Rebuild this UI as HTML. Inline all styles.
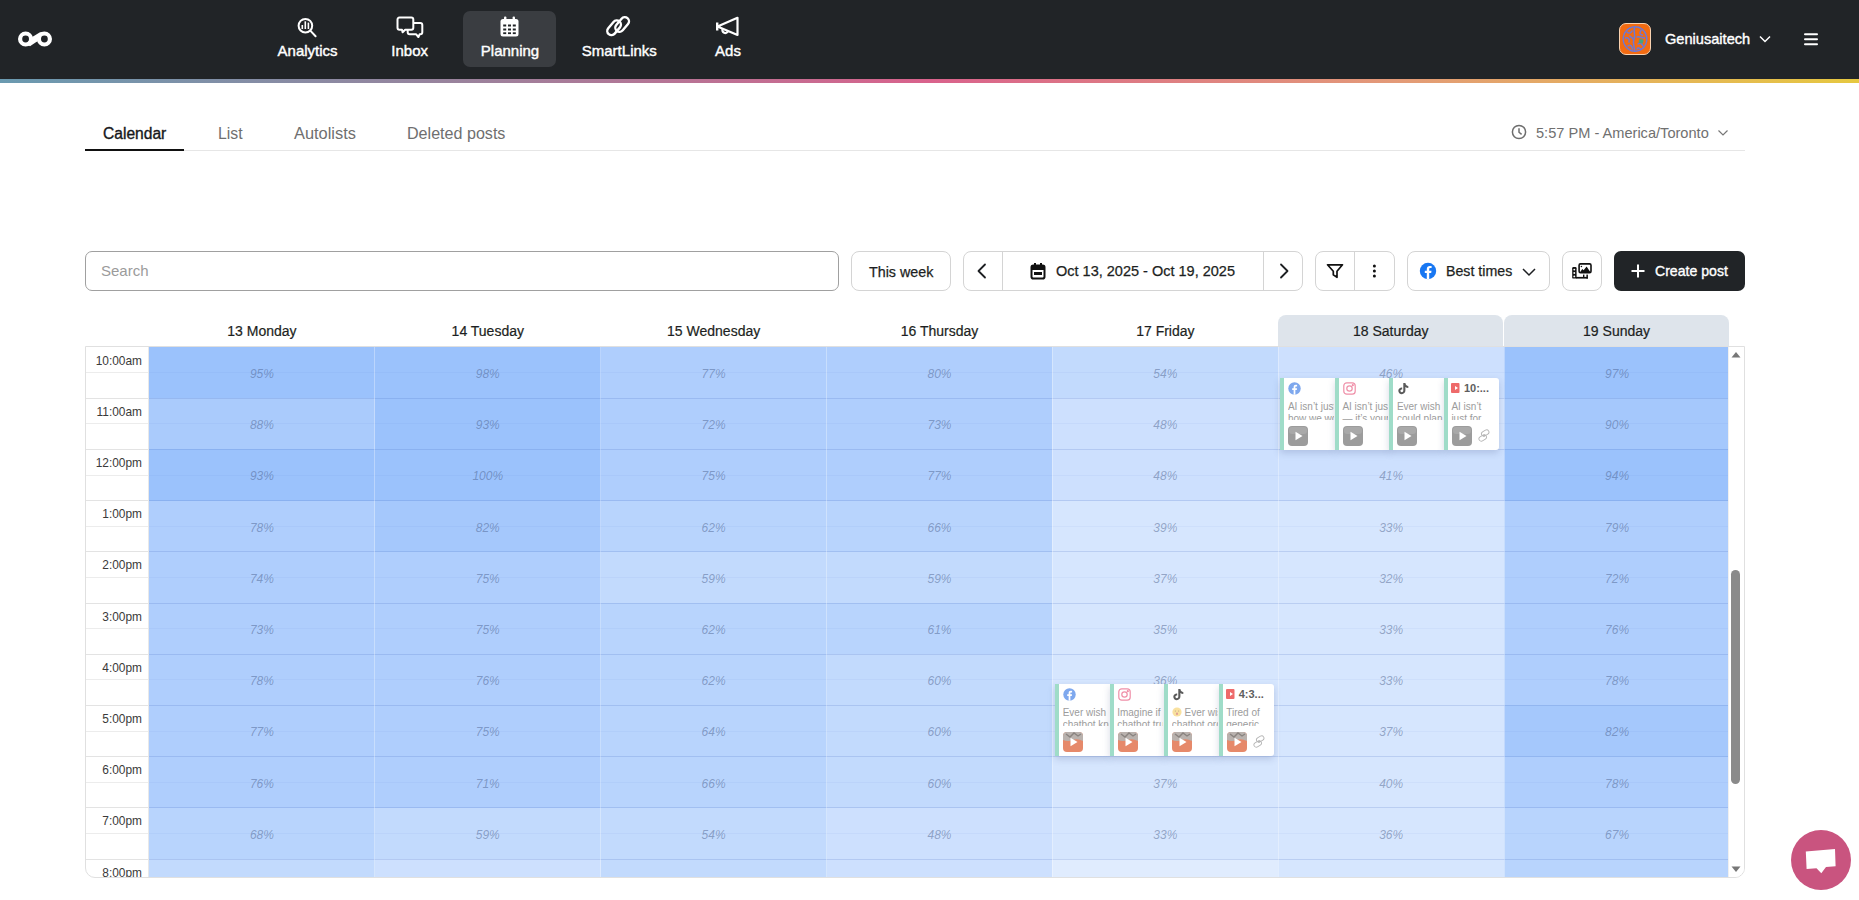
<!DOCTYPE html>
<html><head><meta charset="utf-8"><title>Planning</title>
<style>
*{box-sizing:border-box}
html,body{margin:0;padding:0}
body{width:1859px;height:900px;overflow:hidden;background:#fff;font-family:"Liberation Sans",sans-serif;position:relative;color:#1d1f22}
.abs{position:absolute}
#nav{position:absolute;left:0;top:0;width:1859px;height:79px;background:#212427}
#grad{position:absolute;left:0;top:79px;width:1859px;height:4px;background:linear-gradient(90deg,#6A9AB0 0%,#9A829C 25%,#D9628C 50%,#E39A78 75%,#E6C840 100%)}
.nl{position:absolute;top:43px;font-size:15px;-webkit-text-stroke:0.4px #fff;color:#fff;white-space:nowrap;line-height:16px}
.tab{position:absolute;top:124.5px;font-size:15px;color:#6f6f6f;white-space:nowrap;line-height:18px}
.btn{position:absolute;top:251px;height:40px;border:1px solid #d4d4d4;border-radius:8px;background:#fff}
.bt{position:absolute;font-size:14px;color:#1d1f22;white-space:nowrap;line-height:16px;-webkit-text-stroke:0.25px currentColor}
.dh{position:absolute;top:315px;height:32px;text-align:center;font-size:14px;line-height:32px;color:#1d1f22;-webkit-text-stroke:0.2px #1d1f22}
.tl{position:absolute;left:86px;width:56px;text-align:right;font-size:11.9px;color:#3a3a3a;line-height:13px}
.cell{position:absolute}
.pc{position:absolute;font-size:12px;font-style:italic;color:rgba(65,85,130,0.46);text-align:center;line-height:14px}
.card{position:absolute;background:#fff;border-left:4px solid #9fdcc8;overflow:hidden}
</style></head><body>

<div id="nav"></div><div id="grad"></div>
<svg class="abs" style="left:14px;top:28px" width="44" height="22" viewBox="0 0 44 22">
<circle cx="11.6" cy="11" r="5.5" fill="none" stroke="#fff" stroke-width="4.2"/>
<circle cx="30.4" cy="11" r="5.5" fill="none" stroke="#fff" stroke-width="4.2"/>
<polygon points="12,16 19,8.5 26,4.2 30,4.2 23,13.5 16,18.2" fill="#fff"/>
</svg>
<div class="abs" style="left:463px;top:11px;width:93px;height:56px;border-radius:7px;background:#3a3d41"></div>
<svg class="abs" style="left:296px;top:16px" width="24" height="24" viewBox="0 0 24 24" fill="none" stroke="#fff" stroke-width="2">
<circle cx="9.4" cy="9.7" r="6.8"/><line x1="14.3" y1="14.6" x2="19.6" y2="20.2" stroke-linecap="round"/>
<line x1="6.3" y1="9" x2="6.3" y2="13" stroke-width="1.6"/><line x1="9.3" y1="5.3" x2="9.3" y2="13" stroke-width="1.6"/><line x1="12.4" y1="6.6" x2="12.4" y2="13" stroke-width="1.6"/>
</svg>
<svg class="abs" style="left:395.6px;top:15.8px" width="28" height="24" viewBox="0 0 28 24" fill="none" stroke="#fff" stroke-width="2" stroke-linejoin="round">
<path d="M3.5 1.6 H15.3 Q17.3 1.6 17.3 3.6 V11.7 Q17.3 13.7 15.3 13.7 H9.2 L6.6 16.3 L6 13.7 H3.5 Q1.5 13.7 1.5 11.7 V3.6 Q1.5 1.6 3.5 1.6 Z"/>
<path d="M17.3 7.1 H24.3 Q26.3 7.1 26.3 9.1 V16.3 Q26.3 18.3 24.3 18.3 H23.6 L22.4 21 L20.2 18.3 H13.7 Q11.7 18.3 11.7 16.3 V13.7"/>
</svg>
<svg class="abs" style="left:499px;top:15px" width="21" height="23" viewBox="0 0 21 23">
<rect x="1.5" y="4" width="18" height="17.5" rx="2.5" fill="#fff"/>
<rect x="5" y="1.5" width="2.4" height="5" rx="1" fill="#fff"/><rect x="13.6" y="1.5" width="2.4" height="5" rx="1" fill="#fff"/>
<g fill="#212427"><rect x="4.2" y="9.5" width="3" height="2"/><rect x="9" y="9.5" width="3" height="2"/><rect x="13.8" y="9.5" width="3" height="2"/>
<rect x="4.2" y="13.5" width="3" height="2"/><rect x="9" y="13.5" width="3" height="2"/><rect x="13.8" y="13.5" width="3" height="2"/>
<rect x="4.2" y="17.3" width="3" height="1.8"/><rect x="9" y="17.3" width="3" height="1.8"/><rect x="13.8" y="17.3" width="3" height="1.8"/></g>
</svg>
<svg class="abs" style="left:604px;top:15px" width="28" height="23" viewBox="0 0 28 23" fill="none" stroke="#fff" stroke-width="2.4">
<rect x="1.8" y="8.6" width="16.6" height="8.4" rx="4.2" transform="rotate(-50 10.1 12.8)"/>
<rect x="9.85" y="5.3" width="16.6" height="8.4" rx="4.2" transform="rotate(-50 18.15 9.5)"/>
</svg>
<svg class="abs" style="left:713px;top:15px" width="28" height="24" viewBox="0 0 28 24" fill="none" stroke="#fff" stroke-width="2.2" stroke-linejoin="round">
<path d="M4.2 7.5 V15.5" stroke-width="2.4"/><path d="M4.5 11.5 L24.5 2.8 V20 Z"/><path d="M9.6 14 A2.8 2.8 0 0 0 15 16.2"/>
</svg>
<div class="nl" style="left:247.60000000000002px;width:120px;text-align:center">Analytics</div>
<div class="nl" style="left:349.7px;width:120px;text-align:center">Inbox</div>
<div class="nl" style="left:450px;width:120px;text-align:center">Planning</div>
<div class="nl" style="left:559.3px;width:120px;text-align:center">SmartLinks</div>
<div class="nl" style="left:668px;width:120px;text-align:center">Ads</div>
<div class="abs" style="left:1619px;top:23px;width:32px;height:32px;border-radius:7px;background:#f26b12;border:1px solid #f9d2b0"></div>
<svg class="abs" style="left:1621px;top:25px" width="28" height="28" viewBox="0 0 28 28" fill="none" stroke="#6b78d8" stroke-width="1.5" stroke-linecap="round">
<ellipse cx="14" cy="14" rx="11.8" ry="12.2" stroke-dasharray="3 1.2"/>
<path d="M13.5 2.5 C12 7 15 10 13 14 C11 18 14 22 13.5 26"/>
<path d="M6 7 C8 9 10 8 11 6"/><path d="M4.5 13 C7 12 9 14 8 17"/><path d="M7 21 C9 19 11 21 11.5 24"/>
<path d="M9 11 C10 13 12 12 12.5 15"/><path d="M20 5.5 C18 8 19 10 21.5 10"/><path d="M16 12 C18 11 20 13 23.5 13"/>
<path d="M17 19 C19 17 21 19 22 21"/><path d="M16 24 C17 22 19 23 20 24.5"/>
<path d="M19 14.5 L22 15 L21.5 18 L18.5 17.5 Z" fill="#3fa487" stroke="#3fa487" stroke-width="1"/>
</svg>
<div class="abs" style="left:1665px;top:31px;font-size:14.6px;-webkit-text-stroke:0.4px #fff;color:#fff;line-height:17px;white-space:nowrap">Geniusaitech</div>
<svg class="abs" style="left:1758px;top:34px" width="14" height="10" viewBox="0 0 14 10" fill="none" stroke="#fff" stroke-width="1.5"><path d="M2 2.5 L7 7.5 L12 2.5"/></svg>
<svg class="abs" style="left:1803px;top:32px" width="16" height="15" viewBox="0 0 16 15" fill="#fff"><rect x="1" y="1.3" width="14" height="2" rx="1"/><rect x="1" y="6.3" width="14" height="2" rx="1"/><rect x="1" y="11.3" width="14" height="2" rx="1"/></svg>
<div class="tab" style="left:103px;color:#16181b;-webkit-text-stroke:0.35px #16181b;font-size:15.6px">Calendar</div>
<div class="tab" style="left:218px;font-size:15.8px">List</div>
<div class="tab" style="left:294px;top:123.6px;font-size:16.4px">Autolists</div>
<div class="tab" style="left:407px;top:123.6px;font-size:16.1px">Deleted posts</div>
<div class="abs" style="left:184px;top:150px;width:1561px;height:1px;background:#e6e6e6"></div>
<div class="abs" style="left:85px;top:149px;width:99px;height:2px;background:#111"></div>
<svg class="abs" style="left:1511px;top:124px" width="16" height="16" viewBox="0 0 16 16" fill="none" stroke="#6d6d6d" stroke-width="1.5"><circle cx="8" cy="8" r="6.6"/><path d="M8 4.2 V8.2 L10.6 10.4"/></svg>
<div class="abs" style="left:1536px;top:125px;font-size:14.6px;color:#707070;line-height:17px;white-space:nowrap">5:57 PM - America/Toronto</div>
<svg class="abs" style="left:1717px;top:128px" width="12" height="9" viewBox="0 0 12 9" fill="none" stroke="#777" stroke-width="1.2"><path d="M1.5 2.5 L6 7 L10.5 2.5"/></svg>
<div class="btn" style="left:85px;width:754px;border-color:#a0a0a0;border-radius:7px"></div>
<div class="bt" style="left:101px;top:262px;font-size:15px;color:#9b9b9b;line-height:18px;-webkit-text-stroke:0">Search</div>
<div class="btn" style="left:851px;width:100px"></div>
<div class="bt" style="left:869px;top:264px;font-size:14.3px;line-height:17px">This week</div>
<div class="btn" style="left:963px;width:340px"></div>
<div class="abs" style="left:1002px;top:252px;width:1px;height:38px;background:#d4d4d4"></div>
<div class="abs" style="left:1263px;top:252px;width:1px;height:38px;background:#d4d4d4"></div>
<svg class="abs" style="left:975px;top:263px" width="14" height="16" viewBox="0 0 14 16" fill="none" stroke="#1d1f22" stroke-width="1.8" stroke-linecap="round" stroke-linejoin="round"><path d="M10 1.5 L3.5 8 L10 14.5"/></svg>
<svg class="abs" style="left:1277px;top:263px" width="14" height="16" viewBox="0 0 14 16" fill="none" stroke="#1d1f22" stroke-width="1.8" stroke-linecap="round" stroke-linejoin="round"><path d="M4 1.5 L10.5 8 L4 14.5"/></svg>
<svg class="abs" style="left:1030px;top:262px" width="16" height="18" viewBox="0 0 16 18"><rect x="1.5" y="3.5" width="13" height="13" rx="1.8" fill="none" stroke="#111" stroke-width="2"/><rect x="4" y="1" width="2" height="4" fill="#111"/><rect x="10" y="1" width="2" height="4" fill="#111"/><rect x="1.5" y="3.5" width="13" height="4.5" fill="#111"/><rect x="4" y="10" width="8" height="3" fill="#111"/></svg>
<div class="bt" style="left:1056px;top:263px;font-size:14.5px;line-height:17px">Oct 13, 2025 - Oct 19, 2025</div>
<div class="btn" style="left:1315px;width:80px"></div>
<div class="abs" style="left:1354px;top:252px;width:1px;height:38px;background:#d4d4d4"></div>
<svg class="abs" style="left:1326px;top:263px" width="18" height="16" viewBox="0 0 18 16" fill="none" stroke="#111" stroke-width="1.7" stroke-linejoin="round"><path d="M1.5 1.8 H16.5 L11 8.2 V14.3 L7.3 11.8 V8.2 Z"/></svg>
<svg class="abs" style="left:1371px;top:263px" width="7" height="16" viewBox="0 0 7 16" fill="#111"><circle cx="3.4" cy="3" r="1.5"/><circle cx="3.4" cy="8" r="1.5"/><circle cx="3.4" cy="13" r="1.5"/></svg>
<div class="btn" style="left:1407px;width:143px"></div>
<svg class="abs" style="left:1419px;top:262px" width="18" height="18" viewBox="0 0 18 18"><circle cx="9" cy="9" r="8.2" fill="#1877f2"/><path d="M10.2 17.2 V11 H12.2 L12.5 8.7 H10.2 V7.3 C10.2 6.6 10.5 6.1 11.4 6.1 H12.6 V4.1 C12.2 4 11.5 3.9 10.8 3.9 C9 3.9 7.8 5 7.8 7 V8.7 H5.8 V11 H7.8 V17.2 Z" fill="#fff"/></svg>
<div class="bt" style="left:1446px;top:263px;font-size:14.2px;line-height:17px">Best times</div>
<svg class="abs" style="left:1521px;top:266px" width="16" height="12" viewBox="0 0 16 12" fill="none" stroke="#1d1f22" stroke-width="1.5"><path d="M2 3 L8 9 L14 3"/></svg>
<div class="btn" style="left:1562px;width:40px"></div>
<svg class="abs" style="left:1571px;top:262px" width="22" height="18" viewBox="0 0 22 18"><rect x="8.1" y="1.9" width="11.9" height="8.8" rx="1.4" fill="none" stroke="#111" stroke-width="1.6"/><path d="M8.8 10.6 L11.3 7 L12.6 8.2 L15.6 4.6 L19.6 10.6 Z" fill="#111"/><circle cx="10.4" cy="4.5" r="0.8" fill="#111"/><rect x="1.2" y="5" width="4.4" height="11.6" rx="1.2" fill="#111"/><g fill="#fff"><circle cx="3.3" cy="7.6" r="0.95"/><circle cx="3.3" cy="11" r="0.95"/><circle cx="3.3" cy="14.4" r="0.95"/></g><rect x="5" y="14.9" width="11.8" height="1.7" fill="#111"/><rect x="15.4" y="12.6" width="1.5" height="4" fill="#111"/><rect x="12" y="12.6" width="1.4" height="2.6" fill="#111"/></svg>
<div class="abs" style="left:1614px;top:251px;width:131px;height:40px;border-radius:7px;background:#212427"></div>
<svg class="abs" style="left:1630px;top:263px" width="16" height="16" viewBox="0 0 16 16" stroke="#fff" stroke-width="2"><path d="M8 1.5 V14.5 M1.5 8 H14.5"/></svg>
<div class="abs" style="left:1655px;top:263px;font-size:14.1px;-webkit-text-stroke:0.35px #fff;color:#fff;line-height:17px;white-space:nowrap">Create post</div>
<div class="dh" style="left:149.00px;width:225.86px;">13 Monday</div>
<div class="dh" style="left:374.86px;width:225.86px;">14 Tuesday</div>
<div class="dh" style="left:600.71px;width:225.86px;">15 Wednesday</div>
<div class="dh" style="left:826.57px;width:225.86px;">16 Thursday</div>
<div class="dh" style="left:1052.43px;width:225.86px;">17 Friday</div>
<div class="dh" style="left:1278.29px;width:224.86px;background:#dee4eb;border-radius:8px 8px 0 0;">18 Saturday</div>
<div class="dh" style="left:1504.14px;width:224.86px;background:#dee4eb;border-radius:8px 8px 0 0;">19 Sunday</div>
<div class="abs" style="left:85px;top:346px;width:1660px;height:532px;border:1px solid #e0e0e0;border-radius:0 0 10px 10px;overflow:hidden;background:#fff">
<div class="abs" style="left:0;top:25.1px;width:63px;height:1px;background:#ececec"></div>
<div class="tl" style="left:0;top:7.6px">10:00am</div>
<div class="abs" style="left:0;top:50.7px;width:63px;height:1px;background:#e3e3e3"></div>
<div class="abs" style="left:0;top:76.3px;width:63px;height:1px;background:#ececec"></div>
<div class="tl" style="left:0;top:58.8px">11:00am</div>
<div class="abs" style="left:0;top:101.9px;width:63px;height:1px;background:#e3e3e3"></div>
<div class="abs" style="left:0;top:127.5px;width:63px;height:1px;background:#ececec"></div>
<div class="tl" style="left:0;top:110.0px">12:00pm</div>
<div class="abs" style="left:0;top:153.1px;width:63px;height:1px;background:#e3e3e3"></div>
<div class="abs" style="left:0;top:178.7px;width:63px;height:1px;background:#ececec"></div>
<div class="tl" style="left:0;top:161.2px">1:00pm</div>
<div class="abs" style="left:0;top:204.3px;width:63px;height:1px;background:#e3e3e3"></div>
<div class="abs" style="left:0;top:229.9px;width:63px;height:1px;background:#ececec"></div>
<div class="tl" style="left:0;top:212.4px">2:00pm</div>
<div class="abs" style="left:0;top:255.5px;width:63px;height:1px;background:#e3e3e3"></div>
<div class="abs" style="left:0;top:281.1px;width:63px;height:1px;background:#ececec"></div>
<div class="tl" style="left:0;top:263.6px">3:00pm</div>
<div class="abs" style="left:0;top:306.7px;width:63px;height:1px;background:#e3e3e3"></div>
<div class="abs" style="left:0;top:332.3px;width:63px;height:1px;background:#ececec"></div>
<div class="tl" style="left:0;top:314.8px">4:00pm</div>
<div class="abs" style="left:0;top:357.9px;width:63px;height:1px;background:#e3e3e3"></div>
<div class="abs" style="left:0;top:383.5px;width:63px;height:1px;background:#ececec"></div>
<div class="tl" style="left:0;top:366.0px">5:00pm</div>
<div class="abs" style="left:0;top:409.1px;width:63px;height:1px;background:#e3e3e3"></div>
<div class="abs" style="left:0;top:434.7px;width:63px;height:1px;background:#ececec"></div>
<div class="tl" style="left:0;top:417.2px">6:00pm</div>
<div class="abs" style="left:0;top:460.3px;width:63px;height:1px;background:#e3e3e3"></div>
<div class="abs" style="left:0;top:485.9px;width:63px;height:1px;background:#ececec"></div>
<div class="tl" style="left:0;top:468.4px">7:00pm</div>
<div class="abs" style="left:0;top:511.5px;width:63px;height:1px;background:#e3e3e3"></div>
<div class="abs" style="left:0;top:537.1px;width:63px;height:1px;background:#ececec"></div>
<div class="tl" style="left:0;top:519.6px">8:00pm</div>
<div class="abs" style="left:62px;top:0;width:1px;height:532px;background:#e8e8e8"></div>
<div class="cell" style="left:63.00px;top:0.00px;width:225.86px;height:51.20px;background:rgb(155,194,252)"></div>
<div class="cell" style="left:288.86px;top:0.00px;width:225.86px;height:51.20px;background:rgb(155,194,252)"></div>
<div class="cell" style="left:514.71px;top:0.00px;width:225.86px;height:51.20px;background:rgb(175,206,253)"></div>
<div class="cell" style="left:740.57px;top:0.00px;width:225.86px;height:51.20px;background:rgb(175,206,253)"></div>
<div class="cell" style="left:966.43px;top:0.00px;width:225.86px;height:51.20px;background:rgb(194,218,253)"></div>
<div class="cell" style="left:1192.29px;top:0.00px;width:225.86px;height:51.20px;background:rgb(205,224,254)"></div>
<div class="cell" style="left:1418.14px;top:0.00px;width:225.86px;height:51.20px;background:rgb(155,194,252)"></div>
<div class="cell" style="left:63.00px;top:51.20px;width:225.86px;height:51.20px;background:rgb(170,203,252)"></div>
<div class="cell" style="left:288.86px;top:51.20px;width:225.86px;height:51.20px;background:rgb(155,194,252)"></div>
<div class="cell" style="left:514.71px;top:51.20px;width:225.86px;height:51.20px;background:rgb(175,206,253)"></div>
<div class="cell" style="left:740.57px;top:51.20px;width:225.86px;height:51.20px;background:rgb(175,206,253)"></div>
<div class="cell" style="left:966.43px;top:51.20px;width:225.86px;height:51.20px;background:rgb(205,224,254)"></div>
<div class="cell" style="left:1192.29px;top:51.20px;width:225.86px;height:51.20px;background:rgb(214,230,254)"></div>
<div class="cell" style="left:1418.14px;top:51.20px;width:225.86px;height:51.20px;background:rgb(165,200,252)"></div>
<div class="cell" style="left:63.00px;top:102.40px;width:225.86px;height:51.20px;background:rgb(155,194,252)"></div>
<div class="cell" style="left:288.86px;top:102.40px;width:225.86px;height:51.20px;background:rgb(155,194,252)"></div>
<div class="cell" style="left:514.71px;top:102.40px;width:225.86px;height:51.20px;background:rgb(175,206,253)"></div>
<div class="cell" style="left:740.57px;top:102.40px;width:225.86px;height:51.20px;background:rgb(175,206,253)"></div>
<div class="cell" style="left:966.43px;top:102.40px;width:225.86px;height:51.20px;background:rgb(205,224,254)"></div>
<div class="cell" style="left:1192.29px;top:102.40px;width:225.86px;height:51.20px;background:rgb(205,224,254)"></div>
<div class="cell" style="left:1418.14px;top:102.40px;width:225.86px;height:51.20px;background:rgb(155,194,252)"></div>
<div class="cell" style="left:63.00px;top:153.60px;width:225.86px;height:51.20px;background:rgb(175,206,253)"></div>
<div class="cell" style="left:288.86px;top:153.60px;width:225.86px;height:51.20px;background:rgb(165,200,252)"></div>
<div class="cell" style="left:514.71px;top:153.60px;width:225.86px;height:51.20px;background:rgb(184,212,253)"></div>
<div class="cell" style="left:740.57px;top:153.60px;width:225.86px;height:51.20px;background:rgb(184,212,253)"></div>
<div class="cell" style="left:966.43px;top:153.60px;width:225.86px;height:51.20px;background:rgb(214,230,254)"></div>
<div class="cell" style="left:1192.29px;top:153.60px;width:225.86px;height:51.20px;background:rgb(214,230,254)"></div>
<div class="cell" style="left:1418.14px;top:153.60px;width:225.86px;height:51.20px;background:rgb(175,206,253)"></div>
<div class="cell" style="left:63.00px;top:204.80px;width:225.86px;height:51.20px;background:rgb(175,206,253)"></div>
<div class="cell" style="left:288.86px;top:204.80px;width:225.86px;height:51.20px;background:rgb(175,206,253)"></div>
<div class="cell" style="left:514.71px;top:204.80px;width:225.86px;height:51.20px;background:rgb(194,218,253)"></div>
<div class="cell" style="left:740.57px;top:204.80px;width:225.86px;height:51.20px;background:rgb(194,218,253)"></div>
<div class="cell" style="left:966.43px;top:204.80px;width:225.86px;height:51.20px;background:rgb(214,230,254)"></div>
<div class="cell" style="left:1192.29px;top:204.80px;width:225.86px;height:51.20px;background:rgb(214,230,254)"></div>
<div class="cell" style="left:1418.14px;top:204.80px;width:225.86px;height:51.20px;background:rgb(175,206,253)"></div>
<div class="cell" style="left:63.00px;top:256.00px;width:225.86px;height:51.20px;background:rgb(175,206,253)"></div>
<div class="cell" style="left:288.86px;top:256.00px;width:225.86px;height:51.20px;background:rgb(175,206,253)"></div>
<div class="cell" style="left:514.71px;top:256.00px;width:225.86px;height:51.20px;background:rgb(184,212,253)"></div>
<div class="cell" style="left:740.57px;top:256.00px;width:225.86px;height:51.20px;background:rgb(184,212,253)"></div>
<div class="cell" style="left:966.43px;top:256.00px;width:225.86px;height:51.20px;background:rgb(214,230,254)"></div>
<div class="cell" style="left:1192.29px;top:256.00px;width:225.86px;height:51.20px;background:rgb(214,230,254)"></div>
<div class="cell" style="left:1418.14px;top:256.00px;width:225.86px;height:51.20px;background:rgb(175,206,253)"></div>
<div class="cell" style="left:63.00px;top:307.20px;width:225.86px;height:51.20px;background:rgb(175,206,253)"></div>
<div class="cell" style="left:288.86px;top:307.20px;width:225.86px;height:51.20px;background:rgb(175,206,253)"></div>
<div class="cell" style="left:514.71px;top:307.20px;width:225.86px;height:51.20px;background:rgb(184,212,253)"></div>
<div class="cell" style="left:740.57px;top:307.20px;width:225.86px;height:51.20px;background:rgb(194,218,253)"></div>
<div class="cell" style="left:966.43px;top:307.20px;width:225.86px;height:51.20px;background:rgb(214,230,254)"></div>
<div class="cell" style="left:1192.29px;top:307.20px;width:225.86px;height:51.20px;background:rgb(214,230,254)"></div>
<div class="cell" style="left:1418.14px;top:307.20px;width:225.86px;height:51.20px;background:rgb(175,206,253)"></div>
<div class="cell" style="left:63.00px;top:358.40px;width:225.86px;height:51.20px;background:rgb(175,206,253)"></div>
<div class="cell" style="left:288.86px;top:358.40px;width:225.86px;height:51.20px;background:rgb(175,206,253)"></div>
<div class="cell" style="left:514.71px;top:358.40px;width:225.86px;height:51.20px;background:rgb(184,212,253)"></div>
<div class="cell" style="left:740.57px;top:358.40px;width:225.86px;height:51.20px;background:rgb(194,218,253)"></div>
<div class="cell" style="left:966.43px;top:358.40px;width:225.86px;height:51.20px;background:rgb(214,230,254)"></div>
<div class="cell" style="left:1192.29px;top:358.40px;width:225.86px;height:51.20px;background:rgb(214,230,254)"></div>
<div class="cell" style="left:1418.14px;top:358.40px;width:225.86px;height:51.20px;background:rgb(165,200,252)"></div>
<div class="cell" style="left:63.00px;top:409.60px;width:225.86px;height:51.20px;background:rgb(175,206,253)"></div>
<div class="cell" style="left:288.86px;top:409.60px;width:225.86px;height:51.20px;background:rgb(175,206,253)"></div>
<div class="cell" style="left:514.71px;top:409.60px;width:225.86px;height:51.20px;background:rgb(184,212,253)"></div>
<div class="cell" style="left:740.57px;top:409.60px;width:225.86px;height:51.20px;background:rgb(194,218,253)"></div>
<div class="cell" style="left:966.43px;top:409.60px;width:225.86px;height:51.20px;background:rgb(214,230,254)"></div>
<div class="cell" style="left:1192.29px;top:409.60px;width:225.86px;height:51.20px;background:rgb(214,230,254)"></div>
<div class="cell" style="left:1418.14px;top:409.60px;width:225.86px;height:51.20px;background:rgb(175,206,253)"></div>
<div class="cell" style="left:63.00px;top:460.80px;width:225.86px;height:51.20px;background:rgb(184,212,253)"></div>
<div class="cell" style="left:288.86px;top:460.80px;width:225.86px;height:51.20px;background:rgb(194,218,253)"></div>
<div class="cell" style="left:514.71px;top:460.80px;width:225.86px;height:51.20px;background:rgb(194,218,253)"></div>
<div class="cell" style="left:740.57px;top:460.80px;width:225.86px;height:51.20px;background:rgb(205,224,254)"></div>
<div class="cell" style="left:966.43px;top:460.80px;width:225.86px;height:51.20px;background:rgb(214,230,254)"></div>
<div class="cell" style="left:1192.29px;top:460.80px;width:225.86px;height:51.20px;background:rgb(214,230,254)"></div>
<div class="cell" style="left:1418.14px;top:460.80px;width:225.86px;height:51.20px;background:rgb(184,212,253)"></div>
<div class="cell" style="left:63.00px;top:512.00px;width:225.86px;height:51.20px;background:rgb(194,218,253)"></div>
<div class="cell" style="left:288.86px;top:512.00px;width:225.86px;height:51.20px;background:rgb(205,224,254)"></div>
<div class="cell" style="left:514.71px;top:512.00px;width:225.86px;height:51.20px;background:rgb(194,218,253)"></div>
<div class="cell" style="left:740.57px;top:512.00px;width:225.86px;height:51.20px;background:rgb(205,224,254)"></div>
<div class="cell" style="left:966.43px;top:512.00px;width:225.86px;height:51.20px;background:rgb(224,236,254)"></div>
<div class="cell" style="left:1192.29px;top:512.00px;width:225.86px;height:51.20px;background:rgb(214,230,254)"></div>
<div class="cell" style="left:1418.14px;top:512.00px;width:225.86px;height:51.20px;background:rgb(184,212,253)"></div>
<div class="abs" style="left:63px;top:50.70px;width:1580px;height:1px;background:rgba(60,100,190,0.18)"></div>
<div class="abs" style="left:63px;top:101.90px;width:1580px;height:1px;background:rgba(60,100,190,0.18)"></div>
<div class="abs" style="left:63px;top:153.10px;width:1580px;height:1px;background:rgba(60,100,190,0.18)"></div>
<div class="abs" style="left:63px;top:204.30px;width:1580px;height:1px;background:rgba(60,100,190,0.18)"></div>
<div class="abs" style="left:63px;top:255.50px;width:1580px;height:1px;background:rgba(60,100,190,0.18)"></div>
<div class="abs" style="left:63px;top:306.70px;width:1580px;height:1px;background:rgba(60,100,190,0.18)"></div>
<div class="abs" style="left:63px;top:357.90px;width:1580px;height:1px;background:rgba(60,100,190,0.18)"></div>
<div class="abs" style="left:63px;top:409.10px;width:1580px;height:1px;background:rgba(60,100,190,0.18)"></div>
<div class="abs" style="left:63px;top:460.30px;width:1580px;height:1px;background:rgba(60,100,190,0.18)"></div>
<div class="abs" style="left:63px;top:511.50px;width:1580px;height:1px;background:rgba(60,100,190,0.18)"></div>
<div class="abs" style="left:63px;top:25.10px;width:1580px;height:1px;background:rgba(60,100,190,0.05)"></div>
<div class="abs" style="left:63px;top:76.30px;width:1580px;height:1px;background:rgba(60,100,190,0.05)"></div>
<div class="abs" style="left:63px;top:127.50px;width:1580px;height:1px;background:rgba(60,100,190,0.05)"></div>
<div class="abs" style="left:63px;top:178.70px;width:1580px;height:1px;background:rgba(60,100,190,0.05)"></div>
<div class="abs" style="left:63px;top:229.90px;width:1580px;height:1px;background:rgba(60,100,190,0.05)"></div>
<div class="abs" style="left:63px;top:281.10px;width:1580px;height:1px;background:rgba(60,100,190,0.05)"></div>
<div class="abs" style="left:63px;top:332.30px;width:1580px;height:1px;background:rgba(60,100,190,0.05)"></div>
<div class="abs" style="left:63px;top:383.50px;width:1580px;height:1px;background:rgba(60,100,190,0.05)"></div>
<div class="abs" style="left:63px;top:434.70px;width:1580px;height:1px;background:rgba(60,100,190,0.05)"></div>
<div class="abs" style="left:63px;top:485.90px;width:1580px;height:1px;background:rgba(60,100,190,0.05)"></div>
<div class="abs" style="left:63px;top:537.10px;width:1580px;height:1px;background:rgba(60,100,190,0.05)"></div>
<div class="abs" style="left:288.36px;top:0;width:1px;height:532px;background:rgba(255,255,255,0.32)"></div>
<div class="abs" style="left:514.21px;top:0;width:1px;height:532px;background:rgba(255,255,255,0.32)"></div>
<div class="abs" style="left:740.07px;top:0;width:1px;height:532px;background:rgba(255,255,255,0.32)"></div>
<div class="abs" style="left:965.93px;top:0;width:1px;height:532px;background:rgba(255,255,255,0.32)"></div>
<div class="abs" style="left:1191.79px;top:0;width:1px;height:532px;background:rgba(255,255,255,0.32)"></div>
<div class="abs" style="left:1417.64px;top:0;width:1px;height:532px;background:rgba(255,255,255,0.32)"></div>
<div class="pc" style="left:63.00px;top:20.00px;width:225.86px">95%</div>
<div class="pc" style="left:288.86px;top:20.00px;width:225.86px">98%</div>
<div class="pc" style="left:514.71px;top:20.00px;width:225.86px">77%</div>
<div class="pc" style="left:740.57px;top:20.00px;width:225.86px">80%</div>
<div class="pc" style="left:966.43px;top:20.00px;width:225.86px">54%</div>
<div class="pc" style="left:1192.29px;top:20.00px;width:225.86px">46%</div>
<div class="pc" style="left:1418.14px;top:20.00px;width:225.86px">97%</div>
<div class="pc" style="left:63.00px;top:71.20px;width:225.86px">88%</div>
<div class="pc" style="left:288.86px;top:71.20px;width:225.86px">93%</div>
<div class="pc" style="left:514.71px;top:71.20px;width:225.86px">72%</div>
<div class="pc" style="left:740.57px;top:71.20px;width:225.86px">73%</div>
<div class="pc" style="left:966.43px;top:71.20px;width:225.86px">48%</div>
<div class="pc" style="left:1418.14px;top:71.20px;width:225.86px">90%</div>
<div class="pc" style="left:63.00px;top:122.40px;width:225.86px">93%</div>
<div class="pc" style="left:288.86px;top:122.40px;width:225.86px">100%</div>
<div class="pc" style="left:514.71px;top:122.40px;width:225.86px">75%</div>
<div class="pc" style="left:740.57px;top:122.40px;width:225.86px">77%</div>
<div class="pc" style="left:966.43px;top:122.40px;width:225.86px">48%</div>
<div class="pc" style="left:1192.29px;top:122.40px;width:225.86px">41%</div>
<div class="pc" style="left:1418.14px;top:122.40px;width:225.86px">94%</div>
<div class="pc" style="left:63.00px;top:173.60px;width:225.86px">78%</div>
<div class="pc" style="left:288.86px;top:173.60px;width:225.86px">82%</div>
<div class="pc" style="left:514.71px;top:173.60px;width:225.86px">62%</div>
<div class="pc" style="left:740.57px;top:173.60px;width:225.86px">66%</div>
<div class="pc" style="left:966.43px;top:173.60px;width:225.86px">39%</div>
<div class="pc" style="left:1192.29px;top:173.60px;width:225.86px">33%</div>
<div class="pc" style="left:1418.14px;top:173.60px;width:225.86px">79%</div>
<div class="pc" style="left:63.00px;top:224.80px;width:225.86px">74%</div>
<div class="pc" style="left:288.86px;top:224.80px;width:225.86px">75%</div>
<div class="pc" style="left:514.71px;top:224.80px;width:225.86px">59%</div>
<div class="pc" style="left:740.57px;top:224.80px;width:225.86px">59%</div>
<div class="pc" style="left:966.43px;top:224.80px;width:225.86px">37%</div>
<div class="pc" style="left:1192.29px;top:224.80px;width:225.86px">32%</div>
<div class="pc" style="left:1418.14px;top:224.80px;width:225.86px">72%</div>
<div class="pc" style="left:63.00px;top:276.00px;width:225.86px">73%</div>
<div class="pc" style="left:288.86px;top:276.00px;width:225.86px">75%</div>
<div class="pc" style="left:514.71px;top:276.00px;width:225.86px">62%</div>
<div class="pc" style="left:740.57px;top:276.00px;width:225.86px">61%</div>
<div class="pc" style="left:966.43px;top:276.00px;width:225.86px">35%</div>
<div class="pc" style="left:1192.29px;top:276.00px;width:225.86px">33%</div>
<div class="pc" style="left:1418.14px;top:276.00px;width:225.86px">76%</div>
<div class="pc" style="left:63.00px;top:327.20px;width:225.86px">78%</div>
<div class="pc" style="left:288.86px;top:327.20px;width:225.86px">76%</div>
<div class="pc" style="left:514.71px;top:327.20px;width:225.86px">62%</div>
<div class="pc" style="left:740.57px;top:327.20px;width:225.86px">60%</div>
<div class="pc" style="left:966.43px;top:327.20px;width:225.86px">36%</div>
<div class="pc" style="left:1192.29px;top:327.20px;width:225.86px">33%</div>
<div class="pc" style="left:1418.14px;top:327.20px;width:225.86px">78%</div>
<div class="pc" style="left:63.00px;top:378.40px;width:225.86px">77%</div>
<div class="pc" style="left:288.86px;top:378.40px;width:225.86px">75%</div>
<div class="pc" style="left:514.71px;top:378.40px;width:225.86px">64%</div>
<div class="pc" style="left:740.57px;top:378.40px;width:225.86px">60%</div>
<div class="pc" style="left:1192.29px;top:378.40px;width:225.86px">37%</div>
<div class="pc" style="left:1418.14px;top:378.40px;width:225.86px">82%</div>
<div class="pc" style="left:63.00px;top:429.60px;width:225.86px">76%</div>
<div class="pc" style="left:288.86px;top:429.60px;width:225.86px">71%</div>
<div class="pc" style="left:514.71px;top:429.60px;width:225.86px">66%</div>
<div class="pc" style="left:740.57px;top:429.60px;width:225.86px">60%</div>
<div class="pc" style="left:966.43px;top:429.60px;width:225.86px">37%</div>
<div class="pc" style="left:1192.29px;top:429.60px;width:225.86px">40%</div>
<div class="pc" style="left:1418.14px;top:429.60px;width:225.86px">78%</div>
<div class="pc" style="left:63.00px;top:480.80px;width:225.86px">68%</div>
<div class="pc" style="left:288.86px;top:480.80px;width:225.86px">59%</div>
<div class="pc" style="left:514.71px;top:480.80px;width:225.86px">54%</div>
<div class="pc" style="left:740.57px;top:480.80px;width:225.86px">48%</div>
<div class="pc" style="left:966.43px;top:480.80px;width:225.86px">33%</div>
<div class="pc" style="left:1192.29px;top:480.80px;width:225.86px">36%</div>
<div class="pc" style="left:1418.14px;top:480.80px;width:225.86px">67%</div>
<div class="abs" style="left:1642px;top:0;width:16px;height:532px;background:#fff;border-left:1px solid #f0f0f0"></div>
<div class="abs" style="left:1645px;top:223px;width:9px;height:214px;border-radius:5px;background:#8a8a8a"></div>
<svg class="abs" style="left:1645px;top:4px" width="10" height="7" viewBox="0 0 10 7"><path d="M0.5 6.5 L5 1 L9.5 6.5Z" fill="#777"/></svg>
<svg class="abs" style="left:1645px;top:519px" width="10" height="7" viewBox="0 0 10 7"><path d="M0.5 0.5 L5 6 L9.5 0.5Z" fill="#777"/></svg>
</div>
<div class="card" style="left:1280.40px;top:378px;width:55.00px;height:72px;box-shadow:0 3px 7px rgba(70,80,130,0.22);">
<svg class="abs" style="left:4px;top:4px" width="13" height="13" viewBox="0 0 18 18"><circle cx="9" cy="9" r="8.6" fill="#7ea8ee"/><path d="M10.2 17.6 V11 H12.2 L12.5 8.7 H10.2 V7.3 C10.2 6.6 10.5 6.1 11.4 6.1 H12.6 V4.1 C12.2 4 11.5 3.9 10.8 3.9 C9 3.9 7.8 5 7.8 7 V8.7 H5.8 V11 H7.8 V17.6 Z" fill="#fff"/></svg>
<div class="abs" style="left:3.5px;top:23px;width:46px;height:19.3px;overflow:hidden;font-size:10px;line-height:11.6px;color:#9c9c9c;white-space:nowrap">AI isn’t just<br>how we work</div>
<svg class="abs" style="left:4px;top:47.6px" width="20" height="20" viewBox="0 0 20 20"><rect x="0" y="0" width="20" height="20" rx="4" fill="#9c9c9c"/><rect x="1" y="1" width="18" height="7" rx="3" fill="#a9a9a9"/><path d="M7.5 5.8 L14.5 10 L7.5 14.2 Z" fill="#fff"/></svg>
</div>
<div class="card" style="left:1334.90px;top:378px;width:55.00px;height:72px;box-shadow:0 3px 7px rgba(70,80,130,0.22);">
<svg class="abs" style="left:4px;top:4px" width="13" height="13" viewBox="0 0 13 13" fill="none" stroke="#ef8fa8" stroke-width="1.2"><rect x="0.8" y="0.8" width="11.4" height="11.4" rx="3"/><circle cx="6.5" cy="6.5" r="2.7"/><circle cx="9.8" cy="3.2" r="0.5" fill="#ef8fa8"/></svg>
<div class="abs" style="left:3.5px;top:23px;width:46px;height:19.3px;overflow:hidden;font-size:10px;line-height:11.6px;color:#9c9c9c;white-space:nowrap">AI isn’t just<br>— it’s your</div>
<svg class="abs" style="left:4px;top:47.6px" width="20" height="20" viewBox="0 0 20 20"><rect x="0" y="0" width="20" height="20" rx="4" fill="#9c9c9c"/><rect x="1" y="1" width="18" height="7" rx="3" fill="#a9a9a9"/><path d="M7.5 5.8 L14.5 10 L7.5 14.2 Z" fill="#fff"/></svg>
</div>
<div class="card" style="left:1389.40px;top:378px;width:55.00px;height:72px;box-shadow:0 3px 7px rgba(70,80,130,0.22);">
<svg class="abs" style="left:4px;top:4px" width="13" height="13" viewBox="0 0 13 13"><path d="M6.3 1 H8.4 C8.6 2.7 9.6 3.8 11.3 4 V6 C10.2 6 9.2 5.6 8.4 5 V8.6 C8.4 10.7 6.8 12.2 4.8 12.2 C2.8 12.2 1.3 10.7 1.3 8.8 C1.3 6.7 3.1 5.2 5.2 5.4 V7.5 C4.3 7.3 3.4 7.9 3.4 8.8 C3.4 9.6 4 10.2 4.8 10.2 C5.7 10.2 6.3 9.6 6.3 8.6 Z" fill="#5a5a5a"/></svg>
<div class="abs" style="left:3.5px;top:23px;width:46px;height:19.3px;overflow:hidden;font-size:10px;line-height:11.6px;color:#9c9c9c;white-space:nowrap">Ever wish<br>could plan</div>
<svg class="abs" style="left:4px;top:47.6px" width="20" height="20" viewBox="0 0 20 20"><rect x="0" y="0" width="20" height="20" rx="4" fill="#9c9c9c"/><rect x="1" y="1" width="18" height="7" rx="3" fill="#a9a9a9"/><path d="M7.5 5.8 L14.5 10 L7.5 14.2 Z" fill="#fff"/></svg>
</div>
<div class="card" style="left:1443.90px;top:378px;width:55.00px;height:72px;border-radius:0 3px 3px 0;box-shadow:0 3px 7px rgba(70,80,130,0.22);">
<svg class="abs" style="left:3.5px;top:5px" width="9" height="10" viewBox="0 0 9 10"><rect x="0" y="0" width="8.5" height="10" rx="1" fill="#ee6a6a"/><path d="M4 3 L7 5 L4 7Z" fill="#fff"/></svg>
<div class="abs" style="left:16px;top:3px;font-size:11px;font-weight:bold;color:#5e5e5e;line-height:14px;white-space:nowrap">10:...</div>
<div class="abs" style="left:3.5px;top:23px;width:46px;height:19.3px;overflow:hidden;font-size:10px;line-height:11.6px;color:#9c9c9c;white-space:nowrap">AI isn’t<br>just for</div>
<svg class="abs" style="left:4px;top:47.6px" width="20" height="20" viewBox="0 0 20 20"><rect x="0" y="0" width="20" height="20" rx="4" fill="#9c9c9c"/><rect x="1" y="1" width="18" height="7" rx="3" fill="#a9a9a9"/><path d="M7.5 5.8 L14.5 10 L7.5 14.2 Z" fill="#fff"/></svg>
<svg class="abs" style="left:30px;top:50px" width="13" height="15" viewBox="0 0 13 15" fill="none" stroke="#b5b5b5" stroke-width="0.9"><rect x="3.2" y="2.7" width="8" height="4.6" rx="2.3" transform="rotate(-32 7.2 5)"/><rect x="0.7" y="7.7" width="8" height="4.6" rx="2.3" transform="rotate(-32 4.7 10)"/><circle cx="6" cy="7.5" r="0.7" fill="#b5b5b5"/></svg>
</div>
<div class="card" style="left:1055.20px;top:684px;width:55.00px;height:72px;box-shadow:0 3px 7px rgba(70,80,130,0.22);">
<svg class="abs" style="left:4px;top:4px" width="13" height="13" viewBox="0 0 18 18"><circle cx="9" cy="9" r="8.6" fill="#7ea8ee"/><path d="M10.2 17.6 V11 H12.2 L12.5 8.7 H10.2 V7.3 C10.2 6.6 10.5 6.1 11.4 6.1 H12.6 V4.1 C12.2 4 11.5 3.9 10.8 3.9 C9 3.9 7.8 5 7.8 7 V8.7 H5.8 V11 H7.8 V17.6 Z" fill="#fff"/></svg>
<div class="abs" style="left:3.5px;top:23px;width:46px;height:19.3px;overflow:hidden;font-size:10px;line-height:11.6px;color:#9c9c9c;white-space:nowrap">Ever wish<br>chatbot knew</div>
<svg class="abs" style="left:4px;top:47.6px" width="20" height="20" viewBox="0 0 20 20"><rect x="0" y="0" width="20" height="20" rx="4" fill="#e6896a"/><path d="M0 4 Q0 0 4 0 H16 Q20 0 20 4 V9 Q14 6 10 8 Q5 10 0 8Z" fill="#b9b2ae"/><path d="M3 2 L7 5 L11 1 L15 4 L18 2" stroke="#8a8480" stroke-width="1.4" fill="none"/><path d="M7.5 5.8 L14.5 10 L7.5 14.2 Z" fill="#fff"/></svg>
</div>
<div class="card" style="left:1109.70px;top:684px;width:55.00px;height:72px;box-shadow:0 3px 7px rgba(70,80,130,0.22);">
<svg class="abs" style="left:4px;top:4px" width="13" height="13" viewBox="0 0 13 13" fill="none" stroke="#ef8fa8" stroke-width="1.2"><rect x="0.8" y="0.8" width="11.4" height="11.4" rx="3"/><circle cx="6.5" cy="6.5" r="2.7"/><circle cx="9.8" cy="3.2" r="0.5" fill="#ef8fa8"/></svg>
<div class="abs" style="left:3.5px;top:23px;width:46px;height:19.3px;overflow:hidden;font-size:10px;line-height:11.6px;color:#9c9c9c;white-space:nowrap">Imagine if<br>chatbot truly</div>
<svg class="abs" style="left:4px;top:47.6px" width="20" height="20" viewBox="0 0 20 20"><rect x="0" y="0" width="20" height="20" rx="4" fill="#e6896a"/><path d="M0 4 Q0 0 4 0 H16 Q20 0 20 4 V9 Q14 6 10 8 Q5 10 0 8Z" fill="#b9b2ae"/><path d="M3 2 L7 5 L11 1 L15 4 L18 2" stroke="#8a8480" stroke-width="1.4" fill="none"/><path d="M7.5 5.8 L14.5 10 L7.5 14.2 Z" fill="#fff"/></svg>
</div>
<div class="card" style="left:1164.20px;top:684px;width:55.00px;height:72px;box-shadow:0 3px 7px rgba(70,80,130,0.22);">
<svg class="abs" style="left:4px;top:4px" width="13" height="13" viewBox="0 0 13 13"><path d="M6.3 1 H8.4 C8.6 2.7 9.6 3.8 11.3 4 V6 C10.2 6 9.2 5.6 8.4 5 V8.6 C8.4 10.7 6.8 12.2 4.8 12.2 C2.8 12.2 1.3 10.7 1.3 8.8 C1.3 6.7 3.1 5.2 5.2 5.4 V7.5 C4.3 7.3 3.4 7.9 3.4 8.8 C3.4 9.6 4 10.2 4.8 10.2 C5.7 10.2 6.3 9.6 6.3 8.6 Z" fill="#5a5a5a"/></svg>
<div class="abs" style="left:3.5px;top:23px;width:46px;height:19.3px;overflow:hidden;font-size:10px;line-height:11.6px;color:#9c9c9c;white-space:nowrap"><svg width="10" height="10" viewBox="0 0 10 10" style="vertical-align:-1px;opacity:0.5"><circle cx="5" cy="5" r="4.6" fill="#f5c542"/><circle cx="3.4" cy="4" r="0.6" fill="#6b4a1a"/><circle cx="6.6" cy="4" r="0.6" fill="#6b4a1a"/><ellipse cx="5" cy="6.8" rx="1" ry="1.3" fill="#c0392b"/></svg> Ever wish<br>chatbot org</div>
<svg class="abs" style="left:4px;top:47.6px" width="20" height="20" viewBox="0 0 20 20"><rect x="0" y="0" width="20" height="20" rx="4" fill="#e6896a"/><path d="M0 4 Q0 0 4 0 H16 Q20 0 20 4 V9 Q14 6 10 8 Q5 10 0 8Z" fill="#b9b2ae"/><path d="M3 2 L7 5 L11 1 L15 4 L18 2" stroke="#8a8480" stroke-width="1.4" fill="none"/><path d="M7.5 5.8 L14.5 10 L7.5 14.2 Z" fill="#fff"/></svg>
</div>
<div class="card" style="left:1218.70px;top:684px;width:55.00px;height:72px;border-radius:0 3px 3px 0;box-shadow:0 3px 7px rgba(70,80,130,0.22);">
<svg class="abs" style="left:3.5px;top:5px" width="9" height="10" viewBox="0 0 9 10"><rect x="0" y="0" width="8.5" height="10" rx="1" fill="#ee6a6a"/><path d="M4 3 L7 5 L4 7Z" fill="#fff"/></svg>
<div class="abs" style="left:16px;top:3px;font-size:11px;font-weight:bold;color:#5e5e5e;line-height:14px;white-space:nowrap">4:3...</div>
<div class="abs" style="left:3.5px;top:23px;width:46px;height:19.3px;overflow:hidden;font-size:10px;line-height:11.6px;color:#9c9c9c;white-space:nowrap">Tired of<br>generic</div>
<svg class="abs" style="left:4px;top:47.6px" width="20" height="20" viewBox="0 0 20 20"><rect x="0" y="0" width="20" height="20" rx="4" fill="#e6896a"/><path d="M0 4 Q0 0 4 0 H16 Q20 0 20 4 V9 Q14 6 10 8 Q5 10 0 8Z" fill="#b9b2ae"/><path d="M3 2 L7 5 L11 1 L15 4 L18 2" stroke="#8a8480" stroke-width="1.4" fill="none"/><path d="M7.5 5.8 L14.5 10 L7.5 14.2 Z" fill="#fff"/></svg>
<svg class="abs" style="left:30px;top:50px" width="13" height="15" viewBox="0 0 13 15" fill="none" stroke="#b5b5b5" stroke-width="0.9"><rect x="3.2" y="2.7" width="8" height="4.6" rx="2.3" transform="rotate(-32 7.2 5)"/><rect x="0.7" y="7.7" width="8" height="4.6" rx="2.3" transform="rotate(-32 4.7 10)"/><circle cx="6" cy="7.5" r="0.7" fill="#b5b5b5"/></svg>
</div>
<div class="abs" style="left:1791px;top:830px;width:60px;height:60px;border-radius:50%;background:#c9547f"></div>
<svg class="abs" style="left:1805px;top:847px" width="32" height="28" viewBox="0 0 32 28"><path d="M0.8 4.6 L30 1.9 L30.6 19.2 L21 20.1 L16.3 26.3 L11.5 21.2 L1.6 21.9 Z" fill="#fff"/></svg>
</body></html>
